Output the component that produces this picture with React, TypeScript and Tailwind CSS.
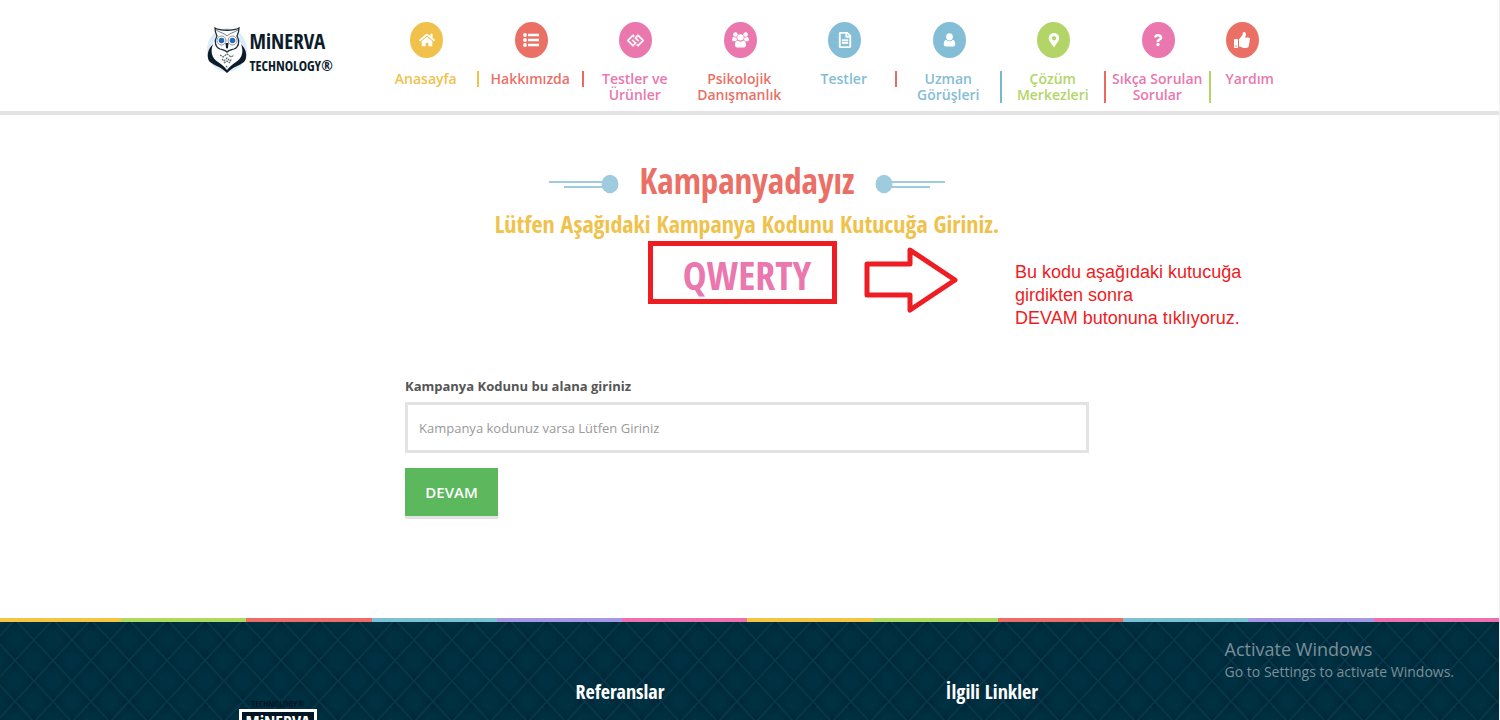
import type { ReactNode } from 'react';
import { FaGg, FaHome, FaMapMarkerAlt, FaQuestion, FaRegFileAlt, FaThumbsUp } from 'react-icons/fa';

type NavItem = {
  label: ReactNode;
  icon: ReactNode;
  circle: string;
  text: string;
  divider?: string;
};

const UserIcon = () => (
  <svg viewBox="0 0 14 16" className="h-4 w-[13px]" fill="currentColor" aria-hidden="true">
    <ellipse cx="7" cy="4.600" rx="3.600" ry="4" />
    <path d="M3.600 7.600C1.600 7.900.8 9.900.8 12.600c0 1.400.9 2.400 2.300 2.400h7.800c1.400 0 2.300-1 2.300-2.400 0-2.700-.8-4.700-2.800-5C9.600 8.600 8.400 9.400 7 9.400S4.400 8.600 3.600 7.600z" />
  </svg>
);

const UsersIcon = () => (
  <svg viewBox="0 0 18 18" className="h-[18px] w-[17px]" fill="currentColor" aria-hidden="true">
    <circle cx="3.600" cy="3.200" r="2.400" />
    <circle cx="14.400" cy="3.200" r="2.400" />
    <path d="M1.600 5.600C.5 6 .2 7.400.2 8.900c0 .9.6 1.400 1.400 1.400h2.200c.6-.7 1.300-1.100 2.100-1.200C4.900 8 4.700 7 4.900 6 3.700 6.500 2.600 6.400 1.600 5.600z" />
    <path d="M16.400 5.600c1.100.4 1.400 1.800 1.400 3.300 0 .9-.6 1.400-1.400 1.400h-2.200c-.6-.7-1.300-1.100-2.100-1.200 1-1.100 1.200-2.100 1-3.100 1.200.5 2.300.4 3.300-.4z" />
    <circle cx="9" cy="6.200" r="3.400" />
    <path d="M6 9.600c-2 .2-2.900 2.200-2.900 4.800 0 1.600 1 2.600 2.400 2.600h7c1.400 0 2.400-1 2.400-2.600 0-2.600-.9-4.600-2.900-4.800-.9.800-1.900 1.200-3 1.200s-2.100-.4-3-1.200z" />
  </svg>
);

const ListIcon = () => (
  <svg viewBox="0 0 16 14" className="h-3.5 w-4" fill="currentColor" aria-hidden="true">
    <circle cx="2" cy="2" r="1.900" />
    <circle cx="2" cy="7" r="1.900" />
    <circle cx="2" cy="12" r="1.900" />
    <path d="M5 .7h11v2.600H5zM5 5.700h11v2.600H5zM5 10.700h11v2.600H5z" />
  </svg>
);

const navItems: NavItem[] = [
  { label: 'Anasayfa', icon: <FaHome />, circle: 'bg-[#f0c24b]', text: 'text-[#f0c24b]', divider: 'border-[#f0c24b]' },
  { label: 'Hakkımızda', icon: <ListIcon />, circle: 'bg-[#ea7066]', text: 'text-[#ea7066]', divider: 'border-[#ea6a60]' },
  { label: <>Testler ve<br />Ürünler</>, icon: <FaGg className="size-[17px]" stroke="currentColor" strokeWidth="24" />, circle: 'bg-[#ea77ad]', text: 'text-[#ea77ad]' },
  { label: 'Psikolojik Danışmanlık', icon: <UsersIcon />, circle: 'bg-[#ea77ad]', text: 'text-[#ea7066]' },
  { label: 'Testler', icon: <FaRegFileAlt stroke="currentColor" strokeWidth="12" />, circle: 'bg-[#84bdd6]', text: 'text-[#84bdd6]', divider: 'border-[#ea6a60]' },
  { label: 'Uzman Görüşleri', icon: <UserIcon />, circle: 'bg-[#84bdd6]', text: 'text-[#84bdd6]', divider: 'border-[#7ab6d0]' },
  { label: 'Çözüm Merkezleri', icon: <FaMapMarkerAlt className="h-3.5" />, circle: 'bg-[#b3d568]', text: 'text-[#b3d568]', divider: 'border-[#ea6a60]' },
  { label: 'Sıkça Sorulan Sorular', icon: <FaQuestion className="h-3" />, circle: 'bg-[#ea77ad]', text: 'text-[#ea77ad]', divider: 'border-[#b3d568]' },
];

const stripes = [
  'bg-[#f3c540]',
  'bg-[#aedb5c]',
  'bg-[#ef6b66]',
  'bg-[#7cc0d6]',
  'bg-[#a697e4]',
  'bg-[#ee71ad]',
];

const Owl = () => (
  <svg viewBox="0 0 42 50" className="h-[50px] w-[42px]" aria-hidden="true">
    <ellipse cx="21" cy="25" rx="20" ry="22" fill="#dcebf9" />
    <path d="M8 17C1 23 1 34 6 38c4 3 8 5 15 10 7-5 11-7 15-10 5-4 5-15-2-21z" fill="#fff" />
    <path d="M7 19C0 26 1 34 4 37c5 4 10 4 17 11 7-7 12-7 17-11 3-3 4-11-3-18 3 8 1 14-5 18-4 3-7 5-9 8-2-3-5-5-9-8-6-4-8-10-5-18z" fill="#0c1c2a" />
    <path d="M9 3c5 3 19 3 24 0 0 4-1 6-2 8 3 5 2 11-3 13-3 1-5 1-7 3-2-2-4-2-7-3-5-2-6-8-3-13-1-2-2-4-2-8z" fill="#fff" stroke="#1d2c38" strokeWidth="1.300" />
    <path d="M10 5c5 3 8 3 11 6 3-3 6-3 11-6" fill="none" stroke="#4d5b66" strokeWidth="0.800" />
    <circle cx="15.500" cy="15.500" r="4.500" fill="#fff" stroke="#8696a2" />
    <circle cx="26.500" cy="15.500" r="4.500" fill="#fff" stroke="#8696a2" />
    <circle cx="15.500" cy="15.500" r="2.800" fill="#2a6bb5" />
    <circle cx="26.500" cy="15.500" r="2.800" fill="#2a6bb5" />
    <path d="M19.500 18h3L22 22.500 21 24l-1-1.500z" fill="#0c1c2a" />
    <path d="M14 30l3 2 4-3 4 3 3-2M16 34l2 2 3-3 3 3 2-2M18 38l3-2 3 2M20 41l1 1 1-1" fill="none" stroke="#5c6872" strokeWidth="1.200" strokeDasharray="2 0.800" />
  </svg>
);

const Ornament = ({ flip = false }: { flip?: boolean }) => (
  <svg viewBox="0 0 70 20" className={flip ? 'h-5 w-[70px] -scale-x-100' : 'h-5 w-[70px]'} aria-hidden="true">
    <path d="M0 8h55M15 13h40" stroke="#9fcbdf" strokeWidth="2" />
    <ellipse cx="61" cy="10" rx="8.500" ry="9.200" fill="#9fcbdf" />
  </svg>
);

const FooterPattern = () => (
  <svg className="absolute inset-0 h-full w-full" aria-hidden="true">
    <defs>
      <radialGradient id="diamond">
        <stop offset="0.300" stopColor="#003142" />
        <stop offset="1" stopColor="#003142" stopOpacity="0" />
      </radialGradient>
      <pattern id="quilt" x="-4" y="-23" width="38" height="41" patternUnits="userSpaceOnUse">
        <rect width="38" height="41" fill="#002536" />
        <ellipse cx="19" cy="0" rx="19" ry="20" fill="url(#diamond)" />
        <ellipse cx="19" cy="41" rx="19" ry="20" fill="url(#diamond)" />
        <ellipse cx="0" cy="20.500" rx="19" ry="20" fill="url(#diamond)" />
        <ellipse cx="38" cy="20.500" rx="19" ry="20" fill="url(#diamond)" />
        <path d="M0 0l38 41M38 0L0 41" stroke="#04384a" strokeWidth="1.800" />
      </pattern>
    </defs>
    <rect width="100%" height="100%" fill="url(#quilt)" />
  </svg>
);

const Header = () => (
  <header className="border-b-4 border-[#e3e3e3]">
    <div className="mx-auto flex max-w-[1088px] items-start">
      <a href="#anasayfa" className="flex w-[169px] shrink-0 items-start pt-[25px] text-[#0c1c2a]">
        <Owl />
        <span className='flex flex-col pt-px pl-0.5 font-["Open_Sans_Condensed",sans-serif] font-bold'>
          <span className="text-[21px] leading-[30px]">MiNERVA</span>
          <span className="text-sm leading-5">
            TECHNOLOGY<span className="font-normal">®</span>
          </span>
        </span>
      </a>
      <nav className="flex flex-1 items-start pt-[22px] pb-2 text-center text-sm leading-4 font-semibold" aria-label="Ana menü">
        {navItems.map((item, i) => (
          <a key={i} href="#menu" className={`flex min-w-0 flex-1 flex-col items-center gap-[13px] ${item.text}`}>
            <span className={`flex h-9 w-[33px] items-center justify-center rounded-[50%] text-base text-white ${item.circle}`}>
              {item.icon}
            </span>
            <span className={`w-full border-r-2 ${item.divider ?? 'border-transparent'}`}>{item.label}</span>
          </a>
        ))}
        <a href="#yardim" className="flex w-[83px] shrink-0 flex-col items-start gap-[13px] pl-[15px] text-[#ea77ad]">
          <span className="flex h-9 w-[33px] items-center justify-center rounded-[50%] bg-[#ea7066] text-base text-white">
            <FaThumbsUp />
          </span>
          Yardım
        </a>
      </nav>
    </div>
  </header>
);

export default function App() {
  return (
    <div className='flex h-screen flex-col overflow-hidden border-r border-[#f0f0f0] bg-white font-["Open_Sans",sans-serif]'>
      <Header />

      <main className="px-4 pt-[42px] pb-[102px]">
        <form className="mx-auto max-w-[689px] pr-[5px]" onSubmit={(e) => e.preventDefault()}>
          <div className='relative text-center font-["Open_Sans_Condensed",sans-serif] font-bold'>
            <div className="flex items-center justify-center gap-[21px]">
              <span className="pt-1.5">
                <Ornament />
              </span>
              <h1 className="text-[35px] leading-[48px] text-[#ea7066]">Kampanyadayız</h1>
              <span className="pt-1.5">
                <Ornament flip />
              </span>
            </div>
            <h2 className="mt-[3px] text-2xl leading-8 text-[#f0c24b]">Lütfen Aşağıdaki Kampanya Kodunu Kutucuğa Giriniz.</h2>
            <p className="text-[40px] leading-[70px] text-[#ea77ad]">QWERTY</p>

            {/* Hand-drawn hints over the campaign code */}
            <div className="absolute top-[84px] left-[243px] h-[63px] w-[189px] border-[5px] border-[#ee1c23]" />
            <svg viewBox="0 0 94 68" className="absolute top-[89px] left-[459px] h-[68px] w-[94px]" aria-hidden="true">
              <path d="M3 18h43V4l45 30-45 30V49H3z" fill="none" stroke="#ee1c23" strokeWidth="5" strokeLinejoin="round" />
            </svg>
            <p className='absolute top-[104px] left-[610px] w-60 text-left font-["Liberation_Sans",sans-serif] text-lg leading-[23px] font-normal text-[#ee1c23]'>
              Bu kodu aşağıdaki kutucuğa
              <br />
              girdikten sonra
              <br />
              DEVAM butonuna tıklıyoruz.
            </p>
          </div>

          <label htmlFor="code" className="mt-[66px] block text-[13px] leading-5 font-bold text-[#555]">
            Kampanya Kodunu bu alana giriniz
          </label>
          <input
            id="code"
            type="text"
            placeholder="Kampanya kodunuz varsa Lütfen Giriniz"
            className="mt-1.5 block h-[51px] w-full border-[3px] border-[#e3e3e3] px-[11px] text-[13px] text-[#555] placeholder:text-[#999]"
          />
          <button
            type="submit"
            className="mt-[15px] h-12 w-[93px] bg-[#5cb85c] text-[15px] font-semibold text-white shadow-[0_3px_0_#e3e3e3]"
          >
            DEVAM
          </button>
        </form>
      </main>

      <footer className="flex min-h-0 flex-1 flex-col">
        <div className="flex h-1 shrink-0">
          <span className="w-[121px] bg-[#f3c540]" />
          {Array.from({ length: 11 }, (_, i) => (
            <span key={i} className={`flex-1 ${stripes[(i + 1) % stripes.length]}`} />
          ))}
        </div>
        <div className="relative min-h-0 flex-1 overflow-hidden bg-[#003142]">
          <FooterPattern />
          <div className='relative mx-auto grid max-w-[1110px] grid-cols-3 pt-14 font-["Open_Sans_Condensed",sans-serif] text-xl leading-7 font-bold text-white'>
            <div className="flex flex-col items-center pt-[21px] pr-[203px]">
              <span className="text-[9px] leading-[10px] text-[#001626]">TECHNOLOGY®</span>
              <span className="border-[3px] border-white bg-[#001626] px-1 text-lg leading-5">MiNERVA</span>
            </div>
            <h3 className="pl-[11px]">Referanslar</h3>
            <h3 className="pl-[11px]">İlgili Linkler</h3>
          </div>
          <div className="absolute top-[13px] right-[45px] text-[#7d8f98]">
            <p className="text-lg leading-7">Activate Windows</p>
            <p className="text-sm leading-[18px]">Go to Settings to activate Windows.</p>
          </div>
        </div>
      </footer>
    </div>
  );
}
